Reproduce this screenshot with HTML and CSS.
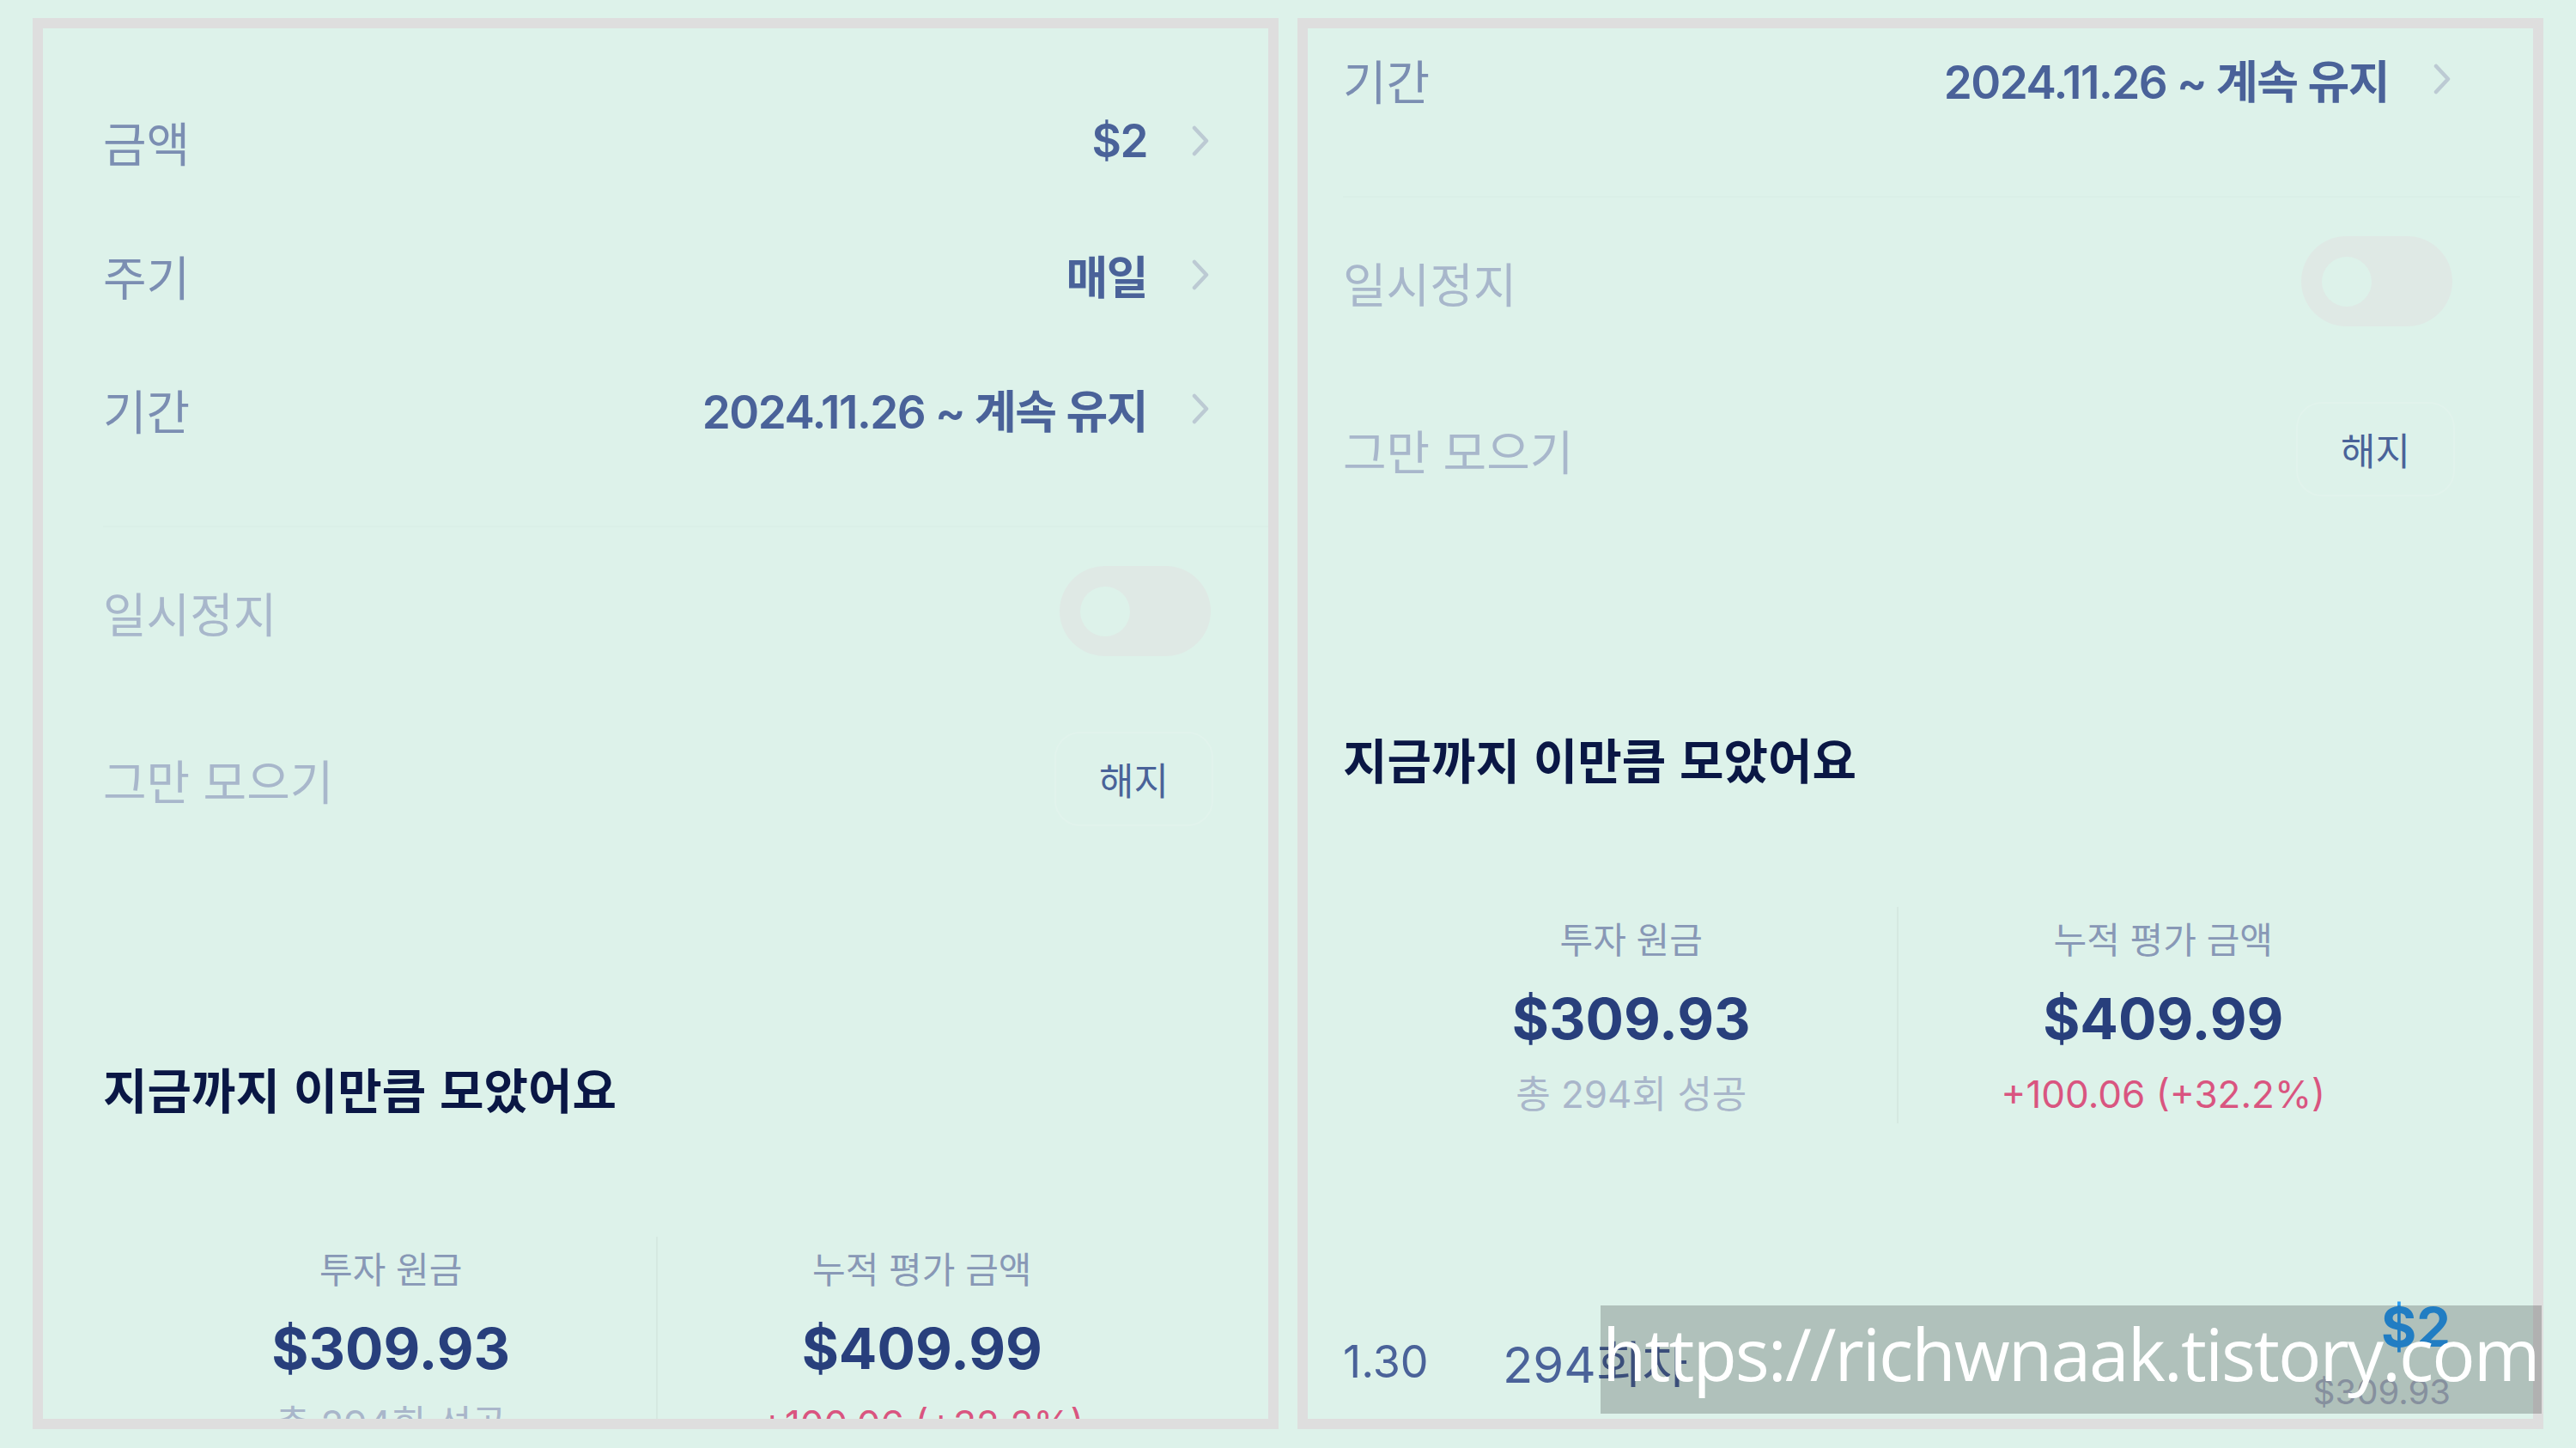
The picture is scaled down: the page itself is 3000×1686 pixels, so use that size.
FILE: index.html
```html
<!DOCTYPE html>
<html lang="ko">
<head>
    <meta charset="UTF-8">
    <title>모으기 설정</title>
    <link rel="stylesheet" href="styles.css">
</head>
<body>
    <div class="page">
        <section class="panel">
            <div class="screen">
                <div class="row">
                    <span class="label">금액</span>
                    <span class="value">$2</span>
                    <svg class="chevron" viewBox="0 0 20 36"><polyline points="3,3 17,18 3,33"/></svg>
                </div>
                <div class="row">
                    <span class="label">주기</span>
                    <span class="value">매일</span>
                    <svg class="chevron" viewBox="0 0 20 36"><polyline points="3,3 17,18 3,33"/></svg>
                </div>
                <div class="row">
                    <span class="label">기간</span>
                    <span class="value">2024.11.26 ~ 계속 유지</span>
                    <svg class="chevron" viewBox="0 0 20 36"><polyline points="3,3 17,18 3,33"/></svg>
                </div>
                <div class="divider"></div>
                <div class="row row-tall">
                    <span class="label label-off">일시정지</span>
                    <span class="toggle"><span class="knob"></span></span>
                </div>
                <div class="row row-tall">
                    <span class="label label-off">그만 모으기</span>
                    <span class="cancel">해지</span>
                </div>
                <h2 class="heading">지금까지 이만큼 모았어요</h2>
                <div class="stats">
                    <div class="stat">
                        <div class="stat-label">투자 원금</div>
                        <div class="stat-value">$309.93</div>
                        <div class="stat-sub">총 294회 성공</div>
                    </div>
                    <div class="stat">
                        <div class="stat-label">누적 평가 금액</div>
                        <div class="stat-value">$409.99</div>
                        <div class="stat-sub stat-up">+100.06 (+32.2%)</div>
                    </div>
                </div>
                <div class="history">
                    <span class="history-date">1.30</span>
                    <span class="history-count">294회차</span>
                    <div class="history-amount">
                        <div class="history-paid">$2</div>
                        <div class="history-total">$309.93</div>
                    </div>
                </div>
            </div>
        </section>

        <section class="panel panel-scrolled">
            <div class="screen">
                <div class="row">
                    <span class="label">금액</span>
                    <span class="value">$2</span>
                    <svg class="chevron" viewBox="0 0 20 36"><polyline points="3,3 17,18 3,33"/></svg>
                </div>
                <div class="row">
                    <span class="label">주기</span>
                    <span class="value">매일</span>
                    <svg class="chevron" viewBox="0 0 20 36"><polyline points="3,3 17,18 3,33"/></svg>
                </div>
                <div class="row">
                    <span class="label">기간</span>
                    <span class="value">2024.11.26 ~ 계속 유지</span>
                    <svg class="chevron" viewBox="0 0 20 36"><polyline points="3,3 17,18 3,33"/></svg>
                </div>
                <div class="divider"></div>
                <div class="row row-tall">
                    <span class="label label-off">일시정지</span>
                    <span class="toggle"><span class="knob"></span></span>
                </div>
                <div class="row row-tall">
                    <span class="label label-off">그만 모으기</span>
                    <span class="cancel">해지</span>
                </div>
                <h2 class="heading">지금까지 이만큼 모았어요</h2>
                <div class="stats">
                    <div class="stat">
                        <div class="stat-label">투자 원금</div>
                        <div class="stat-value">$309.93</div>
                        <div class="stat-sub">총 294회 성공</div>
                    </div>
                    <div class="stat">
                        <div class="stat-label">누적 평가 금액</div>
                        <div class="stat-value">$409.99</div>
                        <div class="stat-sub stat-up">+100.06 (+32.2%)</div>
                    </div>
                </div>
                <div class="history">
                    <span class="history-date">1.30</span>
                    <span class="history-count">294회차</span>
                    <div class="history-amount">
                        <div class="history-paid">$2</div>
                        <div class="history-total">$309.93</div>
                    </div>
                </div>
            </div>
        </section>

        <div class="watermark">https://richwnaak.tistory.com</div>
    </div>
</body>
</html>
```

FILE: styles.css
```css
body {
    margin: 0;
    background: #ddf2ea;
    font-family: Inter, "Noto Sans CJK KR", sans-serif;
}

.page {
    position: relative;
    display: flex;
    gap: 22px;
    padding: 21px 38px 22px;
    height: 1686px;
    box-sizing: border-box;
}

.panel {
    width: 1451px;
    height: 1643px;
    border: 12px solid #dedede;
    box-sizing: border-box;
    overflow: hidden;
    background: #ddf2ea;
}

.screen {
    padding: 53px 69px 0 70px;
}

/* second shot is scrolled down and sits a bit further left */
.panel-scrolled .screen {
    margin-top: -384px;
    padding: 53px 96px 0 41px;
}

.row {
    display: flex;
    align-items: center;
    height: 156px;
}

.row-tall {
    height: 195px;
}

.label {
    flex: 1;
    font-size: 55px;
    color: #7b8eb2;
    font-family: "Noto Sans CJK KR", sans-serif;
}

.label-off {
    color: #a8b7cb;
}

.value {
    font-size: 53px;
    font-weight: 600;
    color: #4a6299;
    letter-spacing: -1.5px;
    margin-right: 52px;
}

.chevron {
    width: 20px;
    height: 36px;
    fill: none;
    stroke: #bccad3;
    stroke-width: 4.5;
    stroke-linecap: round;
    stroke-linejoin: round;
}

.divider {
    height: 2px;
    margin: 58px -81px 0 0;
    background: rgba(0, 0, 0, 0.012);
}

.toggle {
    display: flex;
    align-items: center;
    width: 176px;
    height: 105px;
    margin-right: -2px;
    border-radius: 53px;
    background: #dfe9e5;
}

.knob {
    width: 58px;
    height: 58px;
    margin-left: 24px;
    border-radius: 50%;
    background: #ddf2ea;
}

.cancel {
    display: flex;
    align-items: center;
    justify-content: center;
    width: 185px;
    height: 110px;
    margin-right: -5px;
    box-sizing: border-box;
    border: 2px solid rgba(255, 255, 255, 0.12);
    border-radius: 30px;
    font-family: "Noto Sans CJK KR", sans-serif;
    font-size: 44px;
    color: #4a6399;
}

.heading {
    margin: 228px 0 0;
    font-family: "Noto Sans CJK KR", sans-serif;
    font-size: 56px;
    font-weight: 700;
    line-height: 70px;
    color: #0a1745;
}

.stats {
    display: flex;
    margin: 138px 26px 0 27px;
}

.stat {
    flex: 1;
    text-align: center;
    padding-bottom: 4px;
}

.stat + .stat {
    border-left: 2px solid rgba(0, 0, 0, 0.035);
}

.stat-label {
    font-family: "Noto Sans CJK KR", sans-serif;
    font-size: 42px;
    line-height: 72px;
    color: #8898b6;
}

.stat-value {
    font-size: 66px;
    font-weight: 700;
    line-height: 116px;
    color: #283f7c;
}

.stat-sub {
    font-size: 44px;
    line-height: 60px;
    color: #a9b6ca;
}

.stat-up {
    color: #d95580;
}

.history {
    display: flex;
    align-items: center;
    margin-top: 201px;
}

.history-date {
    width: 186px;
    font-size: 52px;
    color: #4a6299;
}

.history-count {
    flex: 1;
    font-size: 58px;
    color: #4a6299;
}

.history-amount {
    text-align: right;
}

.history-paid {
    font-size: 63px;
    font-weight: 700;
    line-height: 72px;
    color: #2a9df4;
}

.history-total {
    font-size: 40px;
    line-height: 80px;
    color: #a8b4c6;
}

.watermark {
    position: absolute;
    left: 1864px;
    top: 1520px;
    width: 1096px;
    height: 126px;
    padding-left: 2px;
    box-sizing: border-box;
    background: rgba(0, 0, 0, 0.2);
    color: #fff;
    font-family: "Open Sans", sans-serif;
    font-size: 84px;
    line-height: 111px;
    letter-spacing: -2px;
    white-space: nowrap;
    overflow: hidden;
}
```
